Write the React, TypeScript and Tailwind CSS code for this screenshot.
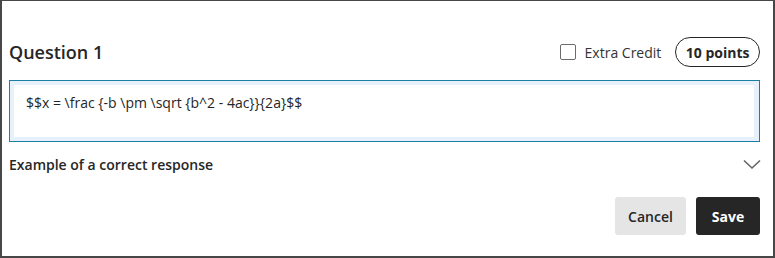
import React from "react";

export default function App() {
  return (
    <div
      className="w-[775px] h-[258px] bg-white border-l-2 border-t border-r-2 border-b-2 border-[#474747] pl-[7px] pr-[13px] pt-[36px]"
      style={{ fontFamily: '"Open Sans", "Noto Sans", sans-serif' }}
    >
      <div className="flex items-center justify-between h-[30px]">
        <div className="text-[18px] font-semibold text-[#262626] leading-none">Question 1</div>
        <div className="flex items-center">
          <span className="w-[16px] h-[16px] border-[1.5px] border-[#6b6b6b] rounded-[2px] mr-[9px]" />
          <span className="text-[14px] text-[#333] mr-[14px]">Extra Credit</span>
          <span className="h-[30px] px-[9.5px] flex items-center rounded-full border border-[#262626] text-[14px] font-bold text-[#262626]">
            10 points
          </span>
        </div>
      </div>
      <div className="mt-[13px] h-[62px] border border-[#1d7ea3]">
        <div className="h-full bg-white border-[4px] border-[#e6f1fb] border-r-[5px] px-[12px] pt-[7px] text-[14px] text-[#262626]">
          {"$$x = \\frac {-b \\pm \\sqrt {b^2 - 4ac}}{2a}$$"}
        </div>
      </div>
      <div className="mt-[10px] flex items-center justify-between h-[24px]">
        <span className="text-[14px] font-semibold text-[#262626]">Example of a correct response</span>
        <svg width="18" height="11" viewBox="0 0 18 11" className="mr-[-1px]">
          <path d="M1 1.5 L9 9 L17 1.5" fill="none" stroke="#666" strokeWidth="1.6" />
        </svg>
      </div>
      <div className="mt-[21px] flex justify-end gap-[10px]">
        <button className="h-[38px] w-[71px] rounded-[3px] bg-[#e5e5e5] text-[14px] font-semibold text-[#262626]">
          Cancel
        </button>
        <button className="h-[38px] w-[64px] rounded-[3px] bg-[#262626] text-[14px] font-bold text-white">
          Save
        </button>
      </div>
    </div>
  );
}
